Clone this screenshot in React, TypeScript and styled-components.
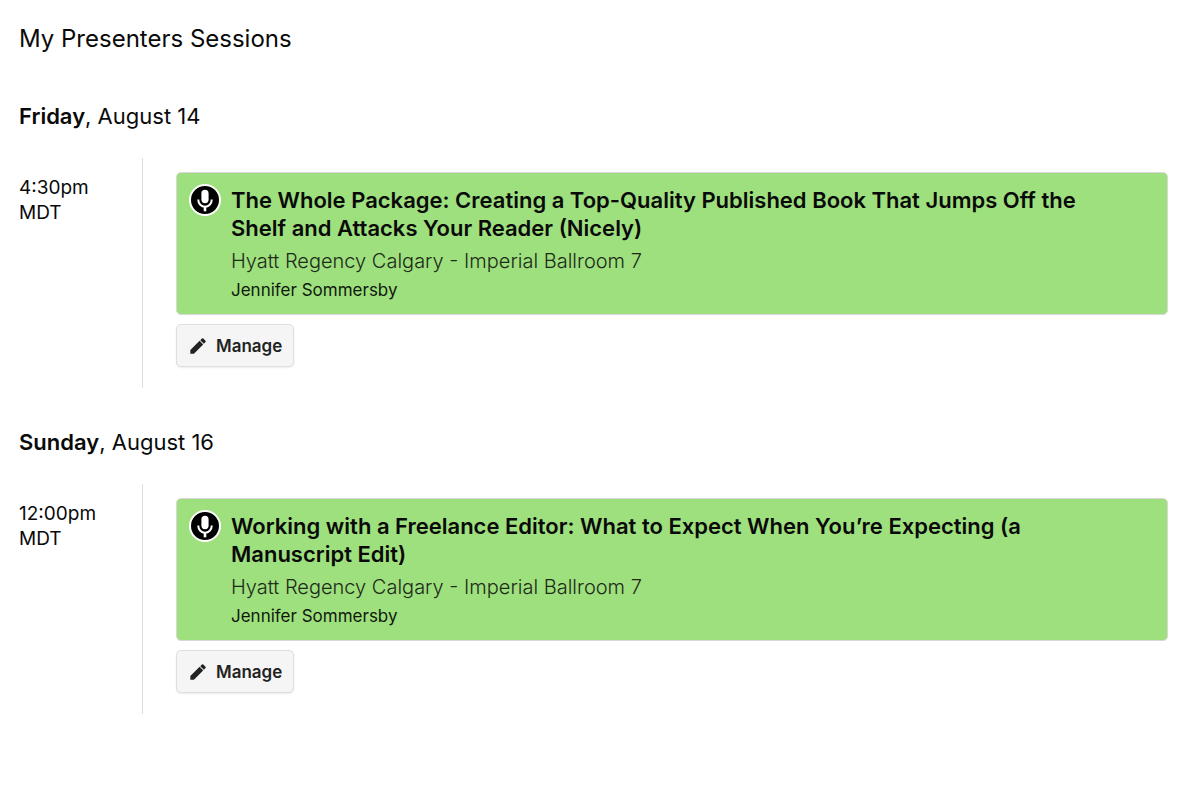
import React from "react";
import styled, { createGlobalStyle } from "styled-components";

const GlobalStyle = createGlobalStyle`
  *, *::before, *::after { box-sizing: border-box; }
  body {
    margin: 0;
    background: #fff;
    color: #0a0a0a;
    font-family: Inter, "Liberation Sans", sans-serif;
  }
  h1, h2, h3, p { margin: 0; font-weight: 400; }
`;

const Page = styled.main`
  padding: 21px 32px 20px 19px;
`;

const PageTitle = styled.h1`
  margin-bottom: 5px;
  font-size: 24px;
  line-height: 36px;
`;

const Day = styled.section`
  padding-top: 36px;
`;

const DayHeading = styled.h2`
  font-size: 22px;
  line-height: 36px;
`;

const Weekday = styled.strong`
  font-weight: 600;
`;

const Slot = styled.div`
  display: grid;
  grid-template-columns: 123px minmax(0, 1fr);
  margin-top: 24px;
`;

const Time = styled.p`
  padding-top: 17px;
  font-size: 19px;
  line-height: 25px;
`;

const Zone = styled.span`
  display: block;
`;

const Sessions = styled.div`
  padding: 14px 0 21px 33px;
  border-left: 1px solid #dcdcdc;
`;

const Card = styled.article`
  display: flex;
  gap: 10px;
  padding: 11px 44px 10px 12px;
  background: #9ee07e;
  border: 1px solid #d9d6dc;
  border-radius: 5px;
`;

const Badge = styled.span`
  flex: none;
  width: 32px;
  height: 32px;
  border: 2px solid #fff;
  border-radius: 50%;
  background: #000;
  color: #fff;
`;

const Details = styled.div`
  padding-top: 2px;
`;

const SessionTitle = styled.h3`
  font-size: 22px;
  line-height: 28px;
  font-weight: 600;
`;

const Place = styled.p`
  padding-top: 4px;
  font-size: 20px;
  line-height: 30px;
  font-weight: 300;
  color: #1d2a18;
`;

const Presenter = styled.p`
  font-size: 17px;
  line-height: 28px;
  color: #10180d;
`;

const ManageButton = styled.button`
  display: flex;
  align-items: center;
  gap: 8px;
  height: 43px;
  margin-top: 9px;
  padding: 0 11px;
  border: 1px solid #dedede;
  border-radius: 5px;
  background: #f5f5f5;
  box-shadow: 0 1px 2px rgba(0, 0, 0, 0.08);
  color: #222;
  font: 600 17px/24px Inter, "Liberation Sans", sans-serif;
  cursor: pointer;
`;

const MicGlyph = styled.svg`
  display: block;
  width: 28px;
  height: 28px;
`;

const PencilGlyph = styled.svg`
  display: block;
  width: 20px;
  height: 20px;
`;

function MicIcon() {
  return (
    <MicGlyph viewBox="0 0 28 28" aria-hidden="true">
      <rect x="10.4" y="3.8" width="7.2" height="13.4" rx="3.6" fill="currentColor" />
      <path
        d="M7.3 13.4v.6a6.7 6.7 0 0 0 13.4 0v-.6"
        fill="none"
        stroke="currentColor"
        strokeWidth="2"
      />
      <path d="M14 20.5v4.8" stroke="currentColor" strokeWidth="2.6" />
    </MicGlyph>
  );
}

function PencilIcon() {
  return (
    <PencilGlyph viewBox="0 0 24 24" aria-hidden="true">
      <path
        d="M2.8 16.9v4.3h4.3L18.2 10.1l-4.3-4.3zM21 7.3a1.2 1.2 0 0 0 0-1.7L18.4 3a1.2 1.2 0 0 0-1.7 0l-2 2L19 9.3z"
        fill="currentColor"
      />
    </PencilGlyph>
  );
}

interface Session {
  weekday: string;
  date: string;
  time: string;
  zone: string;
  title: string;
  place: string;
  presenter: string;
}

const sessions: Session[] = [
  {
    weekday: "Friday",
    date: "August 14",
    time: "4:30pm",
    zone: "MDT",
    title:
      "The Whole Package: Creating a Top-Quality Published Book That Jumps Off the Shelf and Attacks Your Reader (Nicely)",
    place: "Hyatt Regency Calgary - Imperial Ballroom 7",
    presenter: "Jennifer Sommersby",
  },
  {
    weekday: "Sunday",
    date: "August 16",
    time: "12:00pm",
    zone: "MDT",
    title:
      "Working with a Freelance Editor: What to Expect When You’re Expecting (a Manuscript Edit)",
    place: "Hyatt Regency Calgary - Imperial Ballroom 7",
    presenter: "Jennifer Sommersby",
  },
];

export default function App() {
  return (
    <>
      <GlobalStyle />
      <Page>
        <PageTitle>My Presenters Sessions</PageTitle>
        {sessions.map((s) => (
          <Day key={s.weekday}>
            <DayHeading>
              <Weekday>{s.weekday}</Weekday>, {s.date}
            </DayHeading>
            <Slot>
              <Time>
                {s.time}
                <Zone>{s.zone}</Zone>
              </Time>
              <Sessions>
                <Card>
                  <Badge>
                    <MicIcon />
                  </Badge>
                  <Details>
                    <SessionTitle>{s.title}</SessionTitle>
                    <Place>{s.place}</Place>
                    <Presenter>{s.presenter}</Presenter>
                  </Details>
                </Card>
                <ManageButton type="button">
                  <PencilIcon />
                  Manage
                </ManageButton>
              </Sessions>
            </Slot>
          </Day>
        ))}
      </Page>
    </>
  );
}
